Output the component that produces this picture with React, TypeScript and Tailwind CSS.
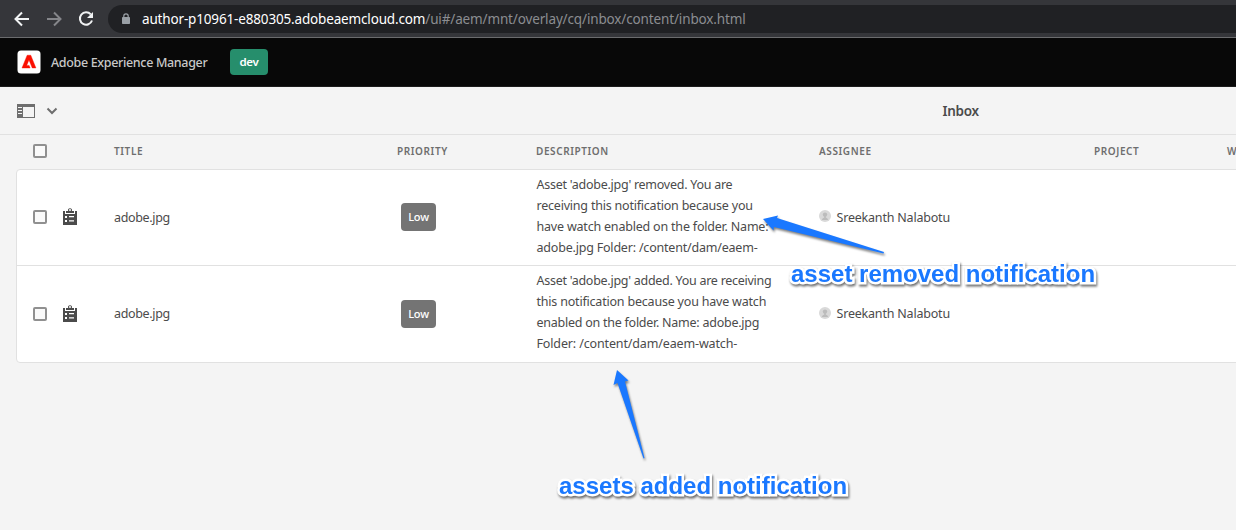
import React from "react";

const SANS = "font-['Noto_Sans','Liberation_Sans',sans-serif]";

function Checkbox() {
  return <span className="block h-[14px] w-[14px] rounded-[2px] border-2 border-[#909090] bg-[#fafafa]" />;
}

function Clipboard() {
  return (
    <svg width="14" height="18" viewBox="0 0 14 18" className="block">
      <path d="M0 3h2v3h10V3h2v14H0z" fill="#4b4b4b" />
      <path d="M3 3h2.200a2 2 0 1 1 3.600 0H11v2H3z" fill="#4b4b4b" />
      <circle cx="7" cy="2" r="1" fill="#fff" />
      <path d="M2 8h2v2H2zM2 12h2v2H2zM6 8h5v1.300H6zM6 12.300h5v1.300H6z" fill="#fff" />
    </svg>
  );
}

type Line = { text: string; tracking: string };

const rows: { height: string; textPad: string; lines: Line[] }[] = [
  {
    height: "h-[96px] border-b border-[#e1e1e1] pb-px",
    textPad: "pt-[2px]",
    lines: [
      { text: "Asset 'adobe.jpg' removed. You are", tracking: "tracking-[-0.26px]" },
      { text: "receiving this notification because you", tracking: "tracking-[-0.21px]" },
      { text: "have watch enabled on the folder. Name:", tracking: "tracking-[-0.2px]" },
      { text: "adobe.jpg Folder: /content/dam/eaem-", tracking: "tracking-[-0.2px]" },
    ],
  },
  {
    height: "h-[96px]",
    textPad: "pt-0",
    lines: [
      { text: "Asset 'adobe.jpg' added. You are receiving", tracking: "tracking-[-0.27px]" },
      { text: "this notification because you have watch", tracking: "tracking-[-0.2px]" },
      { text: "enabled on the folder. Name: adobe.jpg", tracking: "tracking-[-0.25px]" },
      { text: "Folder: /content/dam/eaem-watch-", tracking: "tracking-[-0.14px]" },
    ],
  },
];

function Row({ height, textPad, lines }: { height: string; textPad: string; lines: Line[] }) {
  return (
    <div className={`flex items-center text-[12.5px] text-[#4b4b4b] ${height}`}>
      <div className="w-[30px] shrink-0 pl-4"><Checkbox /></div>
      <div className="w-[67px] shrink-0 pl-4"><Clipboard /></div>
      <div className={`w-[287px] shrink-0 tracking-[-0.35px] ${textPad}`}>adobe.jpg</div>
      <div className="w-[135.5px] shrink-0">
        <span className="flex h-7 w-[35px] items-center justify-center rounded-[4px] bg-[#747474] text-[11px] font-medium tracking-[-0.2px] text-white">Low</span>
      </div>
      <div className="w-[282.5px] shrink-0 self-start pt-1 leading-[21px]">
        {lines.map((l) => (
          <div key={l.text} className={`whitespace-nowrap ${l.tracking}`}>{l.text}</div>
        ))}
      </div>
      <div className="flex items-center whitespace-nowrap">
        <svg width="12" height="12" viewBox="0 0 12 12" className="mb-[3px] mr-[5.5px]">
          <circle cx="6" cy="6" r="6" fill="#d9d9d9" />
          <circle cx="6" cy="4.600" r="2.200" fill="#bcbcbc" />
          <path d="M2.800 10q.3-2 2.400-2.500V6h1.600v1.500Q8.900 8 9.200 10z" fill="#bcbcbc" />
        </svg>
        <span className={`tracking-[-0.2px] ${textPad}`}>Sreekanth Nalabotu</span>
      </div>
    </div>
  );
}

const LABEL =
  "absolute whitespace-nowrap font-['Liberation_Sans',Arial,sans-serif] text-[24px] leading-[28px] font-bold text-[#1a78ff] [paint-order:stroke_fill] [-webkit-text-stroke:5px_white] [filter:drop-shadow(1px_2px_1px_rgba(0,0,0,.55))]";

export default function App() {
  return (
    <div className={`relative h-[530px] w-[1236px] overflow-hidden bg-[#f4f4f4] ${SANS}`}>
      <div className="flex h-[38px] items-center border-b border-[#6b6c6e] bg-[#35363a] pl-[14px] pt-px">
        <svg width="16" height="16" viewBox="0 0 16 16" fill="none" stroke="#f1f3f4" strokeWidth="2">
          <path d="M15 8H2M8 1.500 1.500 8 8 14.500" />
        </svg>
        <svg width="16" height="16" viewBox="0 0 16 16" fill="none" stroke="#85868a" strokeWidth="2" className="ml-4">
          <path d="M1 8h13M8 1.500 14.500 8 8 14.500" />
        </svg>
        <svg width="16" height="16" viewBox="0 0 16 16" fill="none" stroke="#f1f3f4" strokeWidth="2" className="ml-4">
          <path d="M12.800 3.400A6.200 6.200 0 1 0 14 9.500" />
          <path d="M15 1v6H9z" fill="#f1f3f4" stroke="none" />
        </svg>
        <div className="ml-[14px] flex h-7 flex-1 items-center rounded-l-full bg-[#202124] pl-[14px] text-[13.5px]">
          <svg width="8" height="11" viewBox="0 0 8 11" className="mb-[2px]">
            <path d="M1.800 4.500V3a2.200 2.200 0 0 1 4.400 0v1.500" fill="none" stroke="#9aa0a6" strokeWidth="1.200" />
            <rect y="4" width="8" height="7" rx="0.800" fill="#9aa0a6" />
          </svg>
          <span className="ml-[12px] whitespace-nowrap tracking-[-0.16px] text-white">author-p10961-e880305.adobeaemcloud.com</span>
          <span className="whitespace-nowrap tracking-[-0.14px] text-[#8b8d91]">/ui#/aem/mnt/overlay/cq/inbox/content/inbox.html</span>
        </div>
      </div>

      <div className="flex h-[49px] items-center border-b border-[#1c1c1c] bg-[#080808] pl-[17px]">
        <svg width="24" height="24" viewBox="0 0 24 24">
          <rect x="0.500" y="0.500" width="23" height="23" rx="3.500" fill="#fff" />
          <path transform="translate(5 4.400) scale(.58 .6)" d="M8.884 1.376h6.232L24 22.624h-6.322L12.014 9.198 8.122 18.342h4.154l1.690 4.282H0z" fill="#fa0f00" stroke="#fa0f00" strokeWidth="0.700" />
        </svg>
        <span className="ml-[10px] w-[179px] whitespace-nowrap pt-[2px] text-[12.5px] font-medium tracking-[-0.34px] text-[#c8c8c8]">Adobe Experience Manager</span>
        <span className="flex h-[26px] w-[38px] items-center justify-center rounded-[4px] bg-[#268e6c] text-[11.5px] font-semibold tracking-[-0.3px] text-white">dev</span>
      </div>

      <div className="flex h-[48px] items-center border-b border-[#e1e1e1] pl-[17px]">
        <svg width="18" height="14" viewBox="0 0 18 14">
          <path d="M0 0h18v14H0z" fill="#6e6e6e" />
          <path d="M6 3h11v10H6zM1 3h4v1H1zM1 6h4v1H1zM1 9h4v1H1z" fill="#f4f4f4" />
        </svg>
        <svg width="12" height="8" viewBox="0 0 12 8" className="ml-[11px]">
          <path d="m1.500 1.500 4.500 4.500 4.500-4.500" fill="none" stroke="#6e6e6e" strokeWidth="2" />
        </svg>
        <span className="ml-[884.5px] pt-[2px] text-[13.5px] font-semibold tracking-[-0.3px] text-[#4b4b4b]">Inbox</span>
      </div>

      <div className="flex h-[34px] items-center whitespace-nowrap pb-[2px] pl-[33px] text-[10px] font-semibold tracking-[0.6px] text-[#6e6e6e]">
        <div className="w-[81px] shrink-0"><Checkbox /></div>
        <div className="w-[283px] shrink-0">TITLE</div>
        <div className="w-[139px] shrink-0">PRIORITY</div>
        <div className="w-[283px] shrink-0">DESCRIPTION</div>
        <div className="w-[275px] shrink-0">ASSIGNEE</div>
        <div className="w-[133px] shrink-0">PROJECT</div>
        <div>W</div>
      </div>

      <div className="ml-4 h-[194px] w-[1240px] rounded-[4px] border border-[#e1e1e1] bg-white">
        {rows.map((r) => <Row key={r.lines[0].text} {...r} />)}
      </div>

      <svg width="1236" height="530" viewBox="0 0 1236 530" className="pointer-events-none absolute inset-0 [filter:drop-shadow(1px_2px_1px_rgba(0,0,0,.5))]">
        <path d="M763 219 778 215.500 777 218 884 252 883.500 253.500 774 227 773.500 230.500z" fill="#1a78ff" />
        <path d="M617 370 628.500 380.500 625 381.500 644.500 458 643.500 458.500 617.500 383 613.500 385z" fill="#1a78ff" />
      </svg>
      <div className={`${LABEL} left-[791px] top-[260px]`}>asset removed notification</div>
      <div className={`${LABEL} left-[559px] top-[472px]`}>assets added notification</div>
    </div>
  );
}
